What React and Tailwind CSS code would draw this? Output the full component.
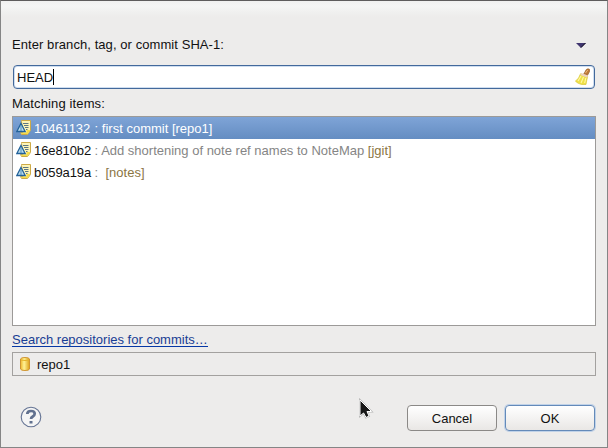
const rows = [
  { id: "10461132", message: "first commit", repo: "[repo1]", selected: true },
  { id: "16e810b2", message: "Add shortening of note ref names to NoteMap", repo: "[jgit]" },
  { id: "b059a19a", message: "", repo: "[notes]" },
];

function CommitIcon() {
  return (
    <svg width="16" height="16" viewBox="0 0 16 16" className="shrink-0">
      <path d="M5.5 1.5V.5H14.5V10.5L11.5 14.5H5.5L4.5 12.5H7Z" fill="#fdf5b8" stroke="#cdaa48" />
      <path d="M5.5 14V12.5H10.5V10H14V10.5L11.5 14Z" fill="#f5dc48" />
      <path d="M7 3.5H12.5M8 5.5H12.5M9 7.5H12.5M10 9.5H11.5" stroke="#5c7583" />
      <path d="M5 3.5L9.2 11.5H.8Z" fill="#bcdcec" stroke="#23629a" strokeWidth="1.3" />
      <path d="M5 5V11" stroke="#4c8db8" />
    </svg>
  );
}

function Broom() {
  return (
    <svg className="block" width="16" height="18" viewBox="0 0 16 18">
      <path d="M8.8 6L11.3 1.5Q13 .3 14.5 1.3V3.5L12.4 7.5Z" fill="#bd7938" stroke="#9a6029" strokeWidth=".7" />
      <path d="M10.5 5L12.7 2" stroke="#efbd7d" />
      <path d="M5.5 5.8L12.7 8.6L11.8 12L11 16.5H6.5Q3 15.8.4 13.2Q4.2 10.5 5.5 5.8Z" fill="#eee047" stroke="#d8c739" strokeWidth=".7" />
      <path d="M6 8L3 13M8.5 9L6 15M10.8 10L9.7 15" stroke="#fff8a5" strokeWidth="1.1" />
      <path d="M5.7 6L12.6 8.6" stroke="#ecd2bd" strokeWidth="2.2" />
    </svg>
  );
}

export default function App() {
  return (
    <main className="relative flex h-[448px] w-[608px] flex-col border border-[#858585] border-t-[#5e5c5d] bg-[#edeceb] bg-[linear-gradient(#f0f0f0_0,#f5f5f5_5px,#f0f0ef_11px,#edeceb_16px)] pr-[11px] pl-[11px] font-['Liberation_Sans',sans-serif] text-[13px] leading-[16px] text-[#111]">
      <div className="mt-[36px] flex h-4 items-center justify-between pr-[10px]">
        <span className="tracking-[0.07px]">Enter branch, tag, or commit SHA-1:</span>
        <svg width="10" height="5" viewBox="0 0 10 5"><path d="M0 0H10L5 5Z" fill="#40356f" /><path d="M9.5 0L5 4.5" stroke="#171421" /></svg>
      </div>
      <div className="mt-[12px] ml-px flex h-6 w-[582px] shrink-0 items-center rounded-[4px] border border-[#43699b] bg-white pr-[3px] pl-[3px] shadow-[inset_0_0_0_1px_#cfdef0]">
        <span className="pt-px">HEAD</span><span className="h-4 w-px bg-black" />
        <span className="ml-auto"><Broom /></span>
      </div>
      <div className="mt-[7px] h-4 tracking-[0.13px]">Matching items:</div>
      <div className="mt-[4px] h-[210px] w-[584px] shrink-0 border border-[#9c9a98] bg-white">
        {rows.map((row) => (
          <div key={row.id} className={`flex h-[22px] items-center whitespace-pre pl-[3px] ${row.selected ? "bg-linear-to-b from-[#7fa4d7] to-[#648dc2] text-white" : ""}`}>
            <CommitIcon />
            <span className="ml-[2px] w-[57px] pt-[2px] tracking-[-0.1px]">{row.id}</span>
            <span className={`pt-[2px] ${row.selected ? "" : "text-[#858585]"}`}> : {row.message} </span>
            <span className={`pt-[2px] ${row.selected ? "" : "text-[#8b7543]"}`}>{row.repo}</span>
          </div>
        ))}
      </div>
      <a className="mt-[6px] h-[15px] w-fit border-b border-[#0637a5] text-[#183d93]">Search repositories for commits…</a>
      <div className="mt-[5px] flex h-6 w-[584px] shrink-0 items-center border border-[#a3a19f] pl-[7px]">
        <svg width="10" height="14" viewBox="0 0 10 14">
          <defs><linearGradient id="gold"><stop stopColor="#edb52a" /><stop offset=".4" stopColor="#fff396" /><stop offset="1" stopColor="#dda018" /></linearGradient></defs>
          <path d="M.5 2Q1 .5 5 .5Q9 .5 9.5 2V12Q9 13.5 5 13.5Q1 13.5.5 12Z" fill="url(#gold)" stroke="#cf9431" />
          <path d="M1 3Q5 4 9 3" fill="none" stroke="#e4b22a" />
        </svg>
        <span className="ml-[7px] pt-[2px]">repo1</span>
      </div>
      <div className="mt-[29px] flex h-[26px] items-center pr-px">
        <svg className="mb-[2px] ml-[8px]" width="22" height="22" viewBox="0 0 22 22">
          <circle cx="11" cy="11" r="9.8" fill="#f5f5f5" stroke="#657494" strokeWidth="1.1" />
          <path d="M7.3 8Q7.3 5 11 5Q14.7 5 14.7 7.8Q14.7 9.4 12.8 10.5Q11 11.5 11 13" fill="none" stroke="#61718f" strokeWidth="2.7" />
          <path d="M9.5 15H12.5V17.5H9.5Z" fill="#61718f" />
        </svg>
        <button className="ml-auto h-[26px] w-[90px] rounded-[4px] border border-[#8b8987] bg-linear-to-b from-white to-[#e9e7e5] pt-[2px]">Cancel</button>
        <button className="ml-[8px] h-[26px] w-[90px] rounded-[4px] border border-[#648ab9] bg-linear-to-b from-white to-[#e9e7e5] pt-[2px] shadow-[0_0_0_1px_#c0d2e8]">OK</button>
      </div>
      <svg className="absolute top-[397px] left-[357px]" width="16" height="22" viewBox="0 0 16 22">
        <path d="M2 2V18L5.6 15L8 19.5L11 18L9 13.5H13.5Z" fill="#171717" stroke="#b5b5b5" strokeWidth="1.8" />
        <path d="M2 2V18L5.6 15L8 19.5L11 18L9 13.5H13.5Z" fill="#171717" stroke="white" />
      </svg>
    </main>
  );
}
